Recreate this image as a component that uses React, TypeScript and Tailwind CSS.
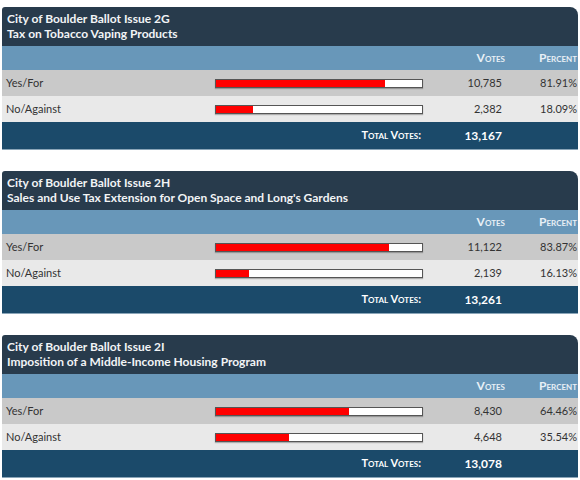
import React from 'react';

interface Choice {
  label: string;
  votes: string;
  percent: number;
}

interface Issue {
  title: string;
  subtitle: string;
  choices: Choice[];
  total: string;
}

const issues: Issue[] = [
  {
    title: 'City of Boulder Ballot Issue 2G',
    subtitle: 'Tax on Tobacco Vaping Products',
    choices: [
      { label: 'Yes/For', votes: '10,785', percent: 81.91 },
      { label: 'No/Against', votes: '2,382', percent: 18.09 },
    ],
    total: '13,167',
  },
  {
    title: 'City of Boulder Ballot Issue 2H',
    subtitle: "Sales and Use Tax Extension for Open Space and Long's Gardens",
    choices: [
      { label: 'Yes/For', votes: '11,122', percent: 83.87 },
      { label: 'No/Against', votes: '2,139', percent: 16.13 },
    ],
    total: '13,261',
  },
  {
    title: 'City of Boulder Ballot Issue 2I',
    subtitle: 'Imposition of a Middle-Income Housing Program',
    choices: [
      { label: 'Yes/For', votes: '8,430', percent: 64.46 },
      { label: 'No/Against', votes: '4,648', percent: 35.54 },
    ],
    total: '13,078',
  },
];

const IssueCard: React.FC<{ issue: Issue }> = ({ issue }) => (
  <div className="w-[576px] ml-[2px] rounded-tl-[3px] rounded-tr-[8px] overflow-hidden">
    <div className="h-[39px] bg-[#283b4c] pl-[5px] pt-[5px] text-[12px] leading-[14.5px] font-bold text-[#f2f4f6]">
      <div>{issue.title}</div>
      <div>{issue.subtitle}</div>
    </div>
    <div className="flex h-[24px] items-center bg-[#6897b9] text-[12px] font-bold text-[#e8f0f6] [font-variant:small-caps]">
      <div className="w-[421px]" />
      <div className="w-[82px] text-right">Votes</div>
      <div className="w-[72px] text-right">Percent</div>
    </div>
    {issue.choices.map((c, i) => (
      <div
        key={c.label}
        className={`flex h-[26px] items-center text-[11px] text-[#333] ${i === 0 ? 'bg-[#c9c9c9]' : 'bg-[#e9e9e9]'}`}
      >
        <div className="w-[213px] pl-[4px]">{c.label}</div>
        <div className="w-[208px] h-[9px] border border-[#555] bg-white shadow-[0_1px_1px_rgba(0,0,0,0.25)]">
          <div className="h-full bg-[#ff0000]" style={{ width: `${c.percent}%` }} />
        </div>
        <div className="w-[79px] text-right">{c.votes}</div>
        <div className="w-[75px] text-right">{c.percent.toFixed(2)}%</div>
      </div>
    ))}
    <div className="flex h-[28px] items-center bg-[#1b4a6a] border-b border-[#8aa5b8] text-white">
      <div className="w-[419px] text-right text-[11px] font-bold [font-variant:small-caps]">Total Votes:</div>
      <div className="w-[81px] text-right text-[12px] font-bold">{issue.total}</div>
    </div>
  </div>
);

export default function App() {
  return (
    <div className="w-[580px] h-[480px] bg-white overflow-hidden pt-[7px] flex flex-col gap-[21px] font-['Lato','Liberation_Sans',sans-serif]">
      {issues.map((issue) => (
        <IssueCard key={issue.title} issue={issue} />
      ))}
    </div>
  );
}
